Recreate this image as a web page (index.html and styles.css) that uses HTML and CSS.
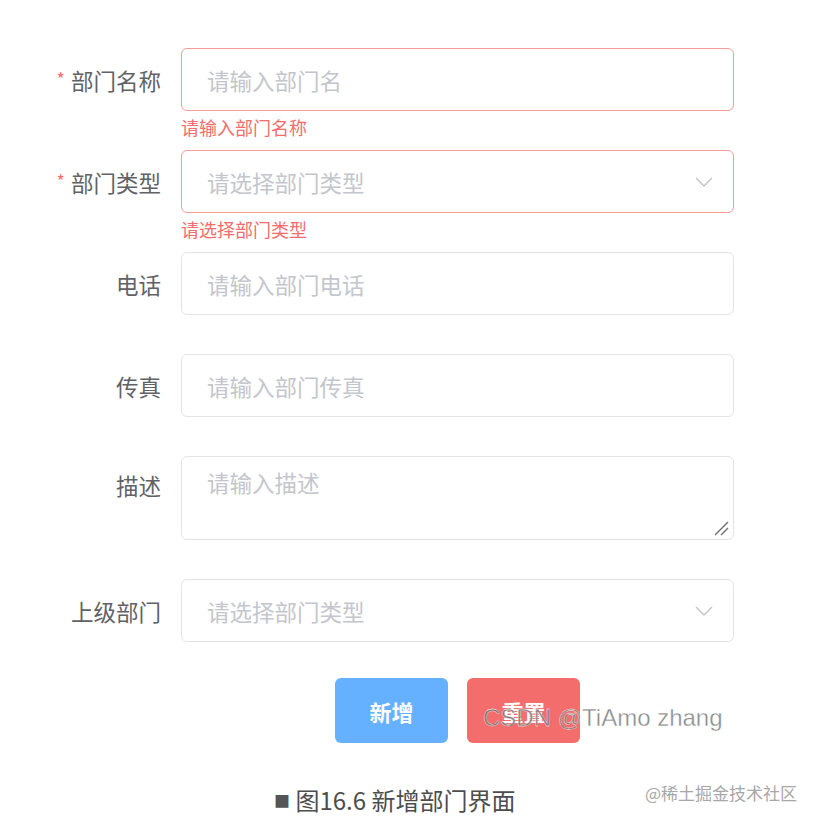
FILE: index.html
```html
<!DOCTYPE html>
<html lang="zh-CN">
<head>
    <meta charset="UTF-8">
    <meta name="viewport" content="width=device-width, initial-scale=1.0">
    <link rel="stylesheet" href="styles.css">
    <title>新增部门</title>
</head>
<body>
<div class="main">
    <form class="deptForm">
        <div class="form-item is-error">
            <label class="label required">部门名称</label>
            <div class="control">
                <div class="field"><span class="ph">请输入部门名</span></div>
                <div class="error">请输入部门名称</div>
            </div>
        </div>
        <div class="form-item is-error">
            <label class="label required">部门类型</label>
            <div class="control">
                <div class="field select"><span class="ph">请选择部门类型</span>
                    <svg class="arrow" width="18" height="10" viewBox="0 0 18 10"><path d="M1 1 L9 9 L17 1" fill="none" stroke="#c0c4cc" stroke-width="1.4"/></svg>
                </div>
                <div class="error">请选择部门类型</div>
            </div>
        </div>
        <div class="form-item">
            <label class="label">电话</label>
            <div class="control">
                <div class="field"><span class="ph">请输入部门电话</span></div>
            </div>
        </div>
        <div class="form-item">
            <label class="label">传真</label>
            <div class="control">
                <div class="field"><span class="ph">请输入部门传真</span></div>
            </div>
        </div>
        <div class="form-item top">
            <label class="label">描述</label>
            <div class="control">
                <div class="field area"><span class="ph">请输入描述</span>
                    <svg class="grip" width="16" height="16" viewBox="0 0 16 16"><path d="M15 2 L2 15 M15 8 L8 15" stroke="#777" stroke-width="1.5"/></svg>
                </div>
            </div>
        </div>
        <div class="form-item">
            <label class="label">上级部门</label>
            <div class="control">
                <div class="field select"><span class="ph">请选择部门类型</span>
                    <svg class="arrow" width="18" height="10" viewBox="0 0 18 10"><path d="M1 1 L9 9 L17 1" fill="none" stroke="#c0c4cc" stroke-width="1.4"/></svg>
                </div>
            </div>
        </div>
        <div class="buttons">
            <button type="button" class="btn primary">新增</button>
            <button type="button" class="btn danger">重置</button>
            <span class="mark">CSDN @TiAmo zhang</span>
        </div>
    </form>
    <div class="caption">
        <span class="square">■</span> 图16.6 新增部门界面
        <span class="juejin">@稀土掘金技术社区</span>
    </div>
</div>
</body>
</html>
```

FILE: styles.css
```css
body {
    margin: 0;
    background: #fff;
    font-family: "Noto Sans CJK SC", "Noto Sans", sans-serif;
}

.main {
    width: 824px;
    height: 826px;
    position: relative;
}

.deptForm {
    padding-top: 48px;
    display: flex;
    flex-direction: column;
}

.form-item {
    display: flex;
    align-items: center;
    margin-bottom: 39px;
}

.form-item.top {
    align-items: flex-start;
}

.label {
    width: 181px;
    padding-right: 20px;
    box-sizing: border-box;
    text-align: right;
    font-size: 22.5px;
    color: #606266;
}

.form-item.top .label {
    padding-top: 13px;
}

.required::before {
    content: "*";
    color: #f56c6c;
    margin-right: 6px;
    font-size: 18px;
    vertical-align: 4px;
}

.control {
    position: relative;
    width: 553px;
}

.field {
    height: 63px;
    box-sizing: border-box;
    border: 1.5px solid #e2e4e8;
    border-radius: 6px;
    padding: 0 25px;
    display: flex;
    align-items: center;
    justify-content: space-between;
    position: relative;
}

.is-error .field {
    border-color: #f79a9a;
}

.field.area {
    height: 84px;
    align-items: flex-start;
    padding-top: 9px;
}

.ph {
    font-size: 22.5px;
    color: #c3c6cc;
}

.arrow {
    margin-right: -5px;
}

.grip {
    position: absolute;
    right: 4px;
    bottom: 3px;
}

.error {
    position: absolute;
    left: 0;
    top: 66px;
    font-size: 18px;
    color: #f56c6c;
}

.buttons {
    display: flex;
    gap: 19px;
    padding-left: 335px;
    margin-top: -3px;
    position: relative;
}

.btn {
    width: 113px;
    height: 65px;
    border: none;
    border-radius: 6px;
    color: #fff;
    font-size: 22px;
    font-family: "Noto Sans CJK SC", sans-serif;
    font-weight: bold;
}

.primary {
    background-color: #66b1ff;
}

.danger {
    background-color: #f36d6d;
}

.mark {
    position: absolute;
    left: 483px;
    top: 26px;
    font-family: "Liberation Sans", sans-serif;
    font-size: 24px;
    color: rgba(120, 120, 120, 0.85);
    -webkit-text-stroke: 0.3px #fff;
}

.caption {
    position: absolute;
    left: 274px;
    top: 782px;
    font-size: 24px;
    color: #4d4d4d;
}

.square {
    font-size: 16px;
    color: #555;
    vertical-align: 3px;
}

.juejin {
    position: absolute;
    left: 371px;
    top: -2px;
    white-space: nowrap;
    font-size: 17px;
    color: #a8a8a8;
}
```
